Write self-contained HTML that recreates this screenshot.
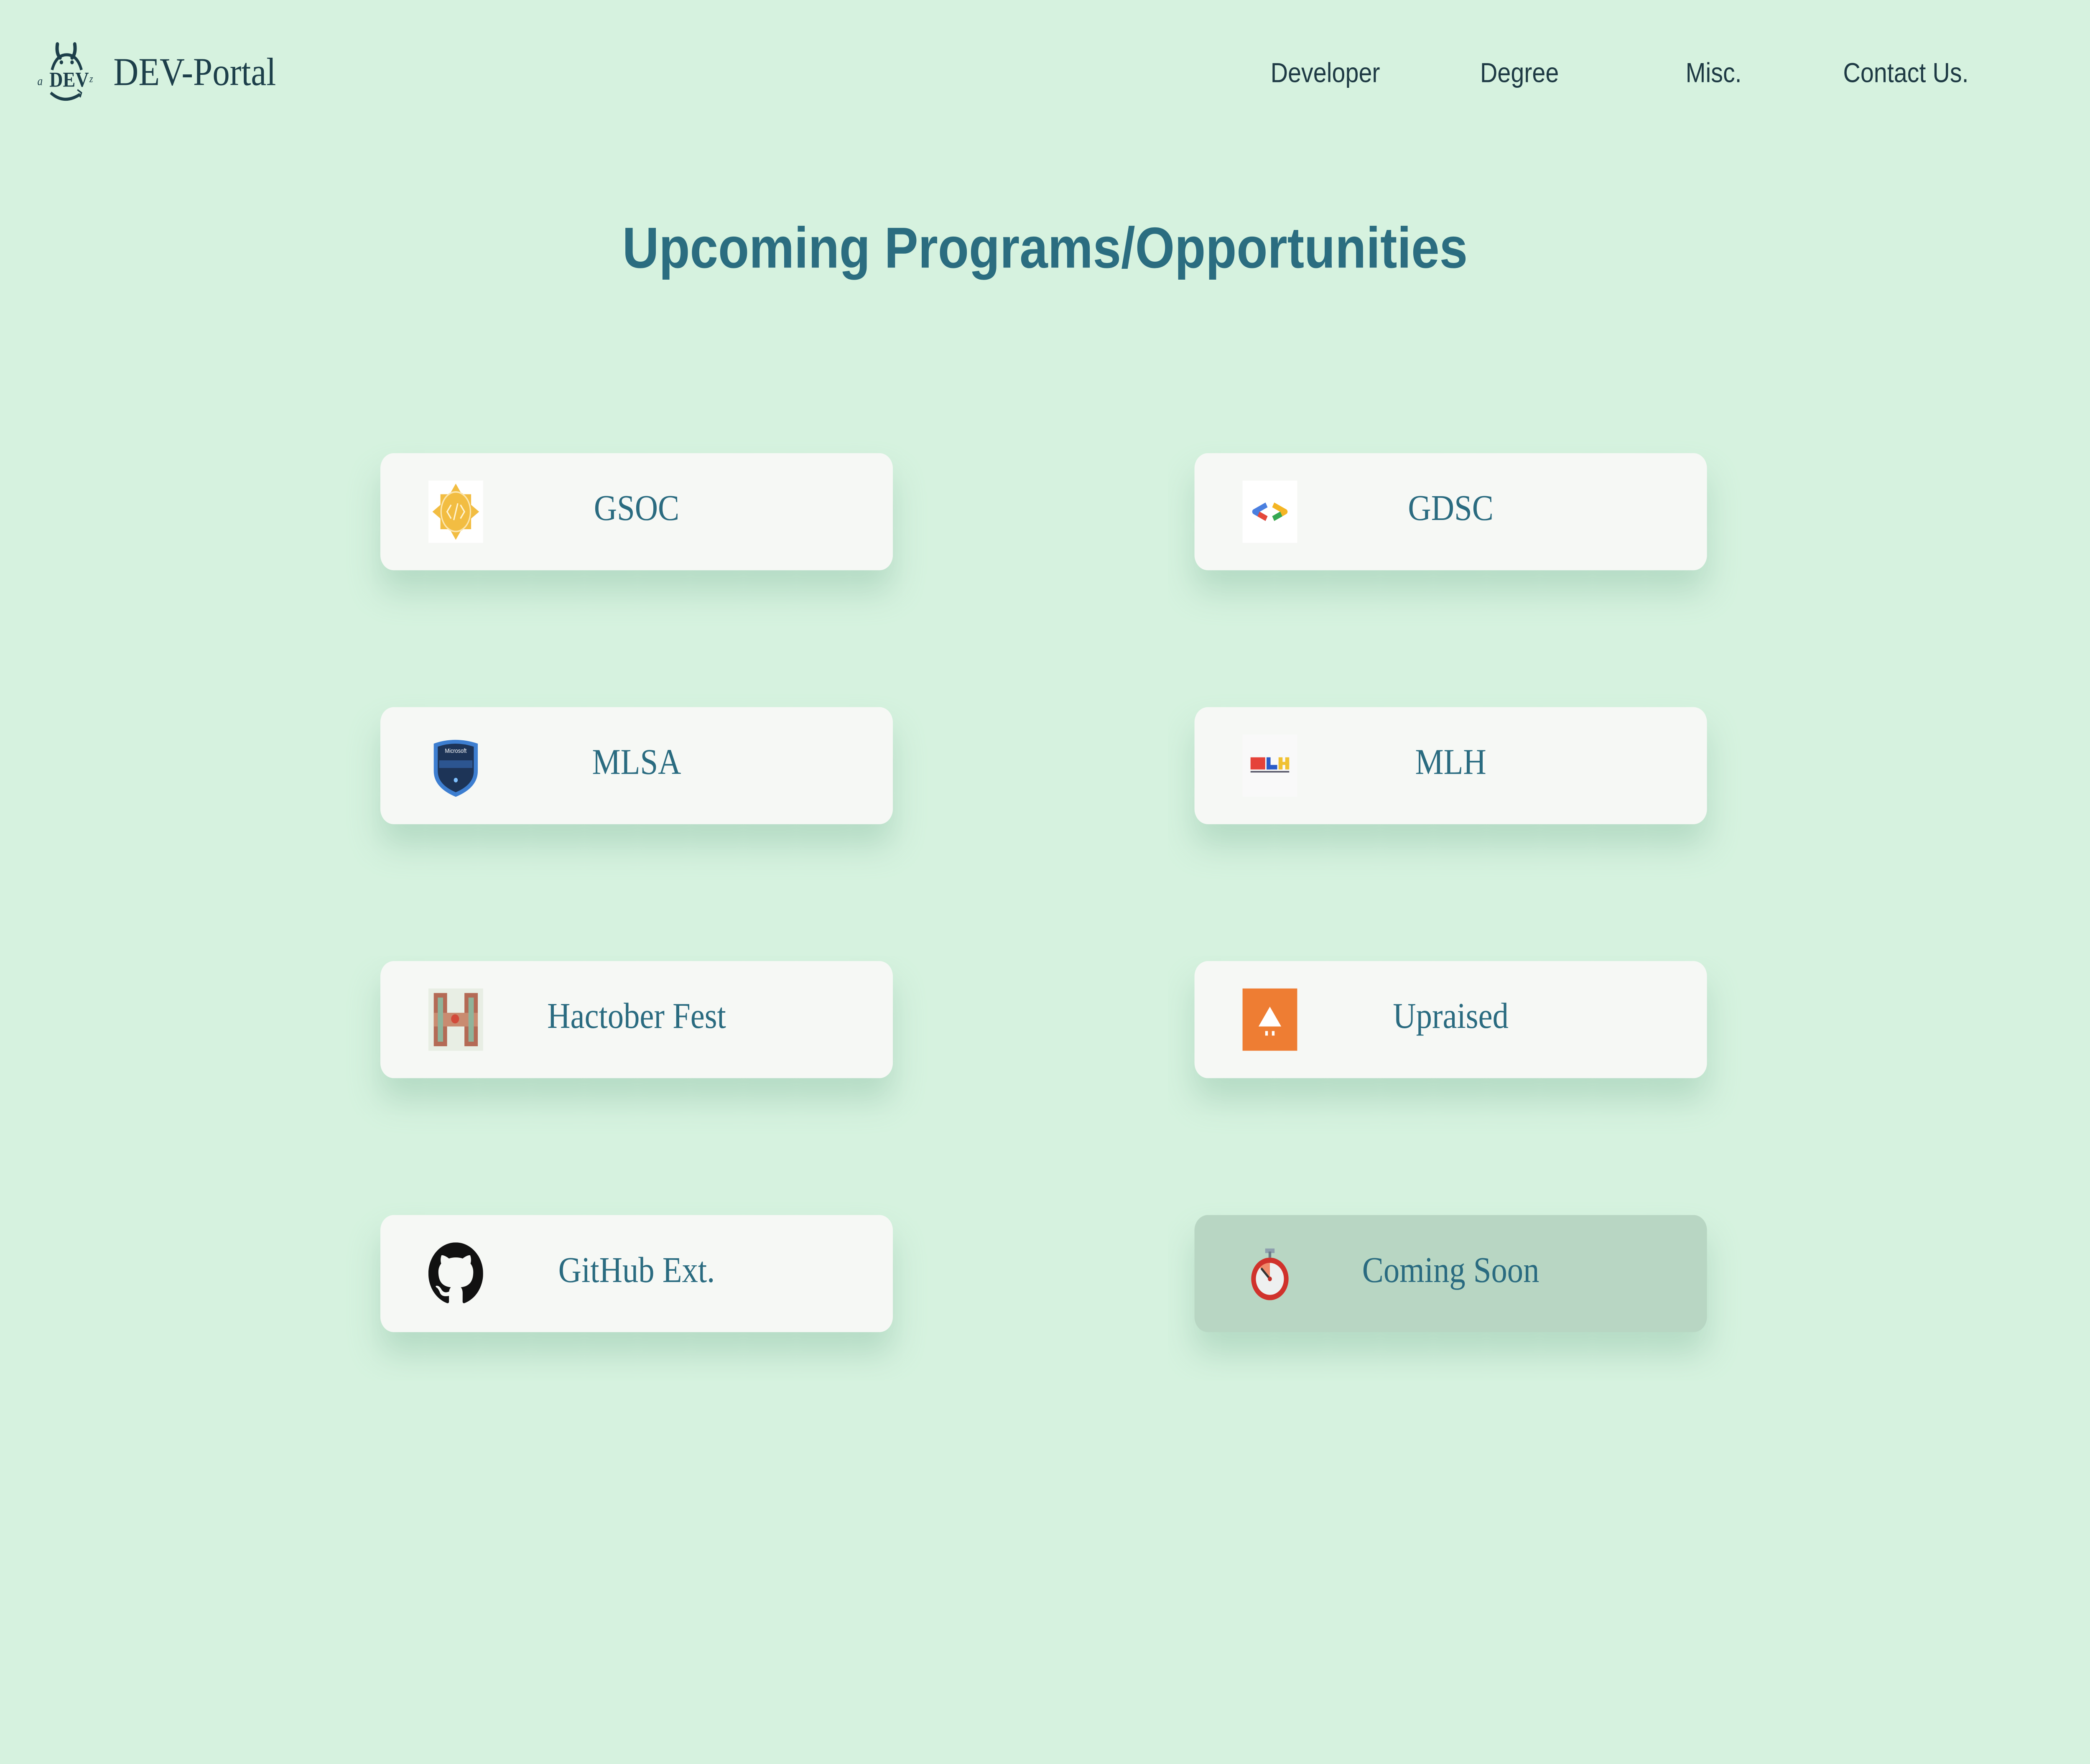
<!DOCTYPE html>
<html><head><meta charset="utf-8"><style>
html,body{margin:0;padding:0;background:#d6f2df;width:100%;height:4220px;overflow:hidden;}
#s{display:block;width:100vw;height:4220px;}
#w{width:1566px;height:1160px;position:relative;font-family:"Liberation Sans",sans-serif;background:#d6f2df;}
.logo{position:absolute;left:26px;top:26px;}
.brand{position:absolute;left:85px;top:33px;font-family:"Liberation Serif",serif;font-size:26px;color:#1d3f4a;}
.nav{position:absolute;top:38px;font-size:18px;color:#1e3a44;}
h1{position:absolute;left:0;width:1566px;top:143px;margin:0;text-align:center;font-size:38px;font-weight:bold;color:#2b6d80;font-family:"Liberation Sans",sans-serif;}
.card{position:absolute;width:384px;height:77px;background:#f6f8f5;border-radius:10px;box-shadow:0 14px 22px rgba(140,190,165,0.45);}
.card .t{position:absolute;left:0;right:0;top:24px;text-align:center;font-family:"Liberation Serif",serif;font-size:24px;color:#2a6b80;}
.card .ic{position:absolute;left:36px;top:18px;width:41px;height:41px;}
.cs{background:#b8d6c3;}
</style></head><body>
<svg id="s" viewBox="0 0 1566 1160" preserveAspectRatio="none" xmlns="http://www.w3.org/2000/svg"><foreignObject x="0" y="0" width="1566" height="1160"><div xmlns="http://www.w3.org/1999/xhtml" id="w">
<svg class="logo" width="50" height="44" viewBox="0 0 50 44">
<path d="M17 3 Q16 9 19 12 M30 3 Q31 9 28 12" stroke="#1d3f4a" stroke-width="2.5" fill="none" stroke-linecap="round"/>
<path d="M13 20 Q16 10 24 10 Q32 10 35 20" stroke="#1d3f4a" stroke-width="2" fill="none"/>
<circle cx="20" cy="15" r="1.3" fill="#1d3f4a"/><circle cx="28" cy="15" r="1.3" fill="#1d3f4a"/>
<text x="2" y="30" font-family="Liberation Serif" font-style="italic" font-size="8" fill="#1d3f4a">a</text>
<text x="11" y="31" font-family="Liberation Serif" font-weight="bold" font-size="14" fill="#1d3f4a">DEV</text>
<text x="41" y="28" font-family="Liberation Serif" font-style="italic" font-size="7" fill="#1d3f4a">z</text>
<path d="M12 35 Q22 43 34 36" stroke="#1d3f4a" stroke-width="2" fill="none"/>
<path d="M32 33 L35 35 L34 38" stroke="#1d3f4a" stroke-width="1" fill="none"/>
</svg>
<div class="brand">DEV-Portal</div>
<div class="nav" style="left:952px">Developer</div>
<div class="nav" style="left:1109px">Degree</div>
<div class="nav" style="left:1263px">Misc.</div>
<div class="nav" style="left:1381px">Contact Us.</div>
<h1>Upcoming Programs/Opportunities</h1>

<div class="card" style="left:285px;top:298px">
<svg class="ic" viewBox="0 0 41 41"><rect width="41" height="41" fill="#fff"/><polygon points="20.5,2 25,9 32,9 32,16 38,20.5 32,25 32,32 25,32 20.5,39 16,32 9,32 9,25 3,20.5 9,16 9,9 16,9" fill="#f2bd42"/><ellipse cx="20.5" cy="20.5" rx="11" ry="13" fill="none" stroke="#fbe6b0" stroke-width="1"/><path d="M17 16 L14 20.5 L17 25 M24 16 L27 20.5 L24 25 M22 15 L19 26" stroke="#fff3d0" stroke-width="1" fill="none"/></svg>
<div class="t">GSOC</div></div>
<div class="card" style="left:895px;top:298px">
<svg class="ic" viewBox="0 0 41 41"><rect width="41" height="41" fill="#fff"/><path d="M18 16 L9 20.5 L18 25" stroke="#4a7fe0" stroke-width="3.5" fill="none" stroke-linejoin="round"/><path d="M12 22 L18 25" stroke="#e5483a" stroke-width="3.5"/><path d="M23 16 L32 20.5 L23 25" stroke="#f4b524" stroke-width="3.5" fill="none" stroke-linejoin="round"/><path d="M29 22 L23 25" stroke="#35a853" stroke-width="3.5"/></svg>
<div class="t">GDSC</div></div>

<div class="card" style="left:285px;top:465px">
<svg class="ic" viewBox="0 0 41 41"><path d="M4 6 Q20 1 37 6 L37 24 Q37 35 20.5 41 Q4 35 4 24 Z" fill="#3d7ed0"/><path d="M7 8 Q20 4 34 8 L34 24 Q34 33 20.5 38 Q7 33 7 24 Z" fill="#1d3457"/><rect x="8" y="17" width="25" height="5" fill="#2c5590"/><text x="20.5" y="12" font-size="4" fill="#fff" text-anchor="middle">Microsoft</text><circle cx="20.5" cy="30" r="1.5" fill="#7fc0ff"/></svg>
<div class="t">MLSA</div></div>
<div class="card" style="left:895px;top:465px">
<svg class="ic" viewBox="0 0 41 41"><rect width="41" height="41" fill="#f9f9f9"/><rect x="6" y="15" width="11" height="8" fill="#e5433a"/><rect x="18" y="15" width="3" height="8" fill="#2b5cc8"/><rect x="18" y="20" width="8" height="3" fill="#2b5cc8"/><rect x="27" y="15" width="3" height="8" fill="#f0c132"/><rect x="32" y="15" width="3" height="8" fill="#f0c132"/><rect x="27" y="18" width="8" height="2" fill="#f0c132"/><rect x="6" y="24" width="29" height="1" fill="#556"/></svg>
<div class="t">MLH</div></div>

<div class="card" style="left:285px;top:632px">
<svg class="ic" viewBox="0 0 41 41"><rect width="41" height="41" fill="#e8eee4"/><rect x="4" y="3" width="10" height="35" fill="#b46a55"/><rect x="27" y="3" width="10" height="35" fill="#b46a55"/><rect x="4" y="16" width="33" height="9" fill="#c98b70"/><rect x="7" y="6" width="4" height="29" fill="#8fb39a"/><rect x="30" y="6" width="4" height="29" fill="#8fb39a"/><circle cx="20" cy="20" r="3" fill="#d24a3a"/></svg>
<div class="t">Hactober Fest</div></div>
<div class="card" style="left:895px;top:632px">
<svg class="ic" viewBox="0 0 41 41"><rect width="41" height="41" fill="#ee7d33"/><path d="M20.5 12 L29 25 L12 25 Z" fill="#fff"/><rect x="17" y="28" width="2" height="3" fill="#fff"/><rect x="22" y="28" width="2" height="3" fill="#fff"/></svg>
<div class="t">Upraised</div></div>

<div class="card" style="left:285px;top:799px">
<svg class="ic" viewBox="0 0 16 16"><path fill="#111" d="M8 0C3.58 0 0 3.58 0 8c0 3.54 2.29 6.53 5.470 7.59.4.07.55-.17.55-.38 0-.19-.01-.82-.01-1.49-2.01.37-2.53-.49-2.69-.94-.09-.23-.48-.94-.82-1.13-.28-.15-.68-.52-.01-.53.63-.01 1.08.58 1.23.82.72 1.21 1.87.87 2.33.66.07-.52.28-.87.51-1.07-1.78-.2-3.64-.89-3.64-3.95 0-.87.31-1.59.82-2.15-.08-.2-.36-1.02.08-2.12 0 0 .67-.21 2.2.82.64-.18 1.32-.27 2-.27.68 0 1.36.09 2 .27 1.53-1.04 2.2-.82 2.2-.82.44 1.1.16 1.92.08 2.12.51.56.82 1.27.82 2.15 0 3.07-1.87 3.75-3.65 3.95.29.25.54.73.54 1.48 0 1.07-.01 1.93-.01 2.2 0 .21.15.46.55.38A8.013 8.013 0 0016 8c0-4.42-3.58-8-8-8z"/></svg>
<div class="t">GitHub Ext.</div></div>
<div class="card cs" style="left:895px;top:799px">
<svg class="ic" viewBox="0 0 41 41"><rect x="17" y="4" width="7" height="3" fill="#8e9fae"/><rect x="19.5" y="6" width="2" height="4" fill="#6c7a86"/><circle cx="20.5" cy="24" r="14" fill="#d0322c"/><circle cx="20.5" cy="24" r="10.5" fill="#eef0f0"/><path d="M20.5 24 L20.5 13.5 A10.5 10.5 0 0 0 13 16.5 Z" fill="#f08a6a"/><path d="M20.5 24 L14 17" stroke="#333" stroke-width="1.5"/><circle cx="20.5" cy="24" r="1.5" fill="#c0302a"/></svg>
<div class="t">Coming Soon</div></div>
</div></foreignObject></svg>
</body></html>
